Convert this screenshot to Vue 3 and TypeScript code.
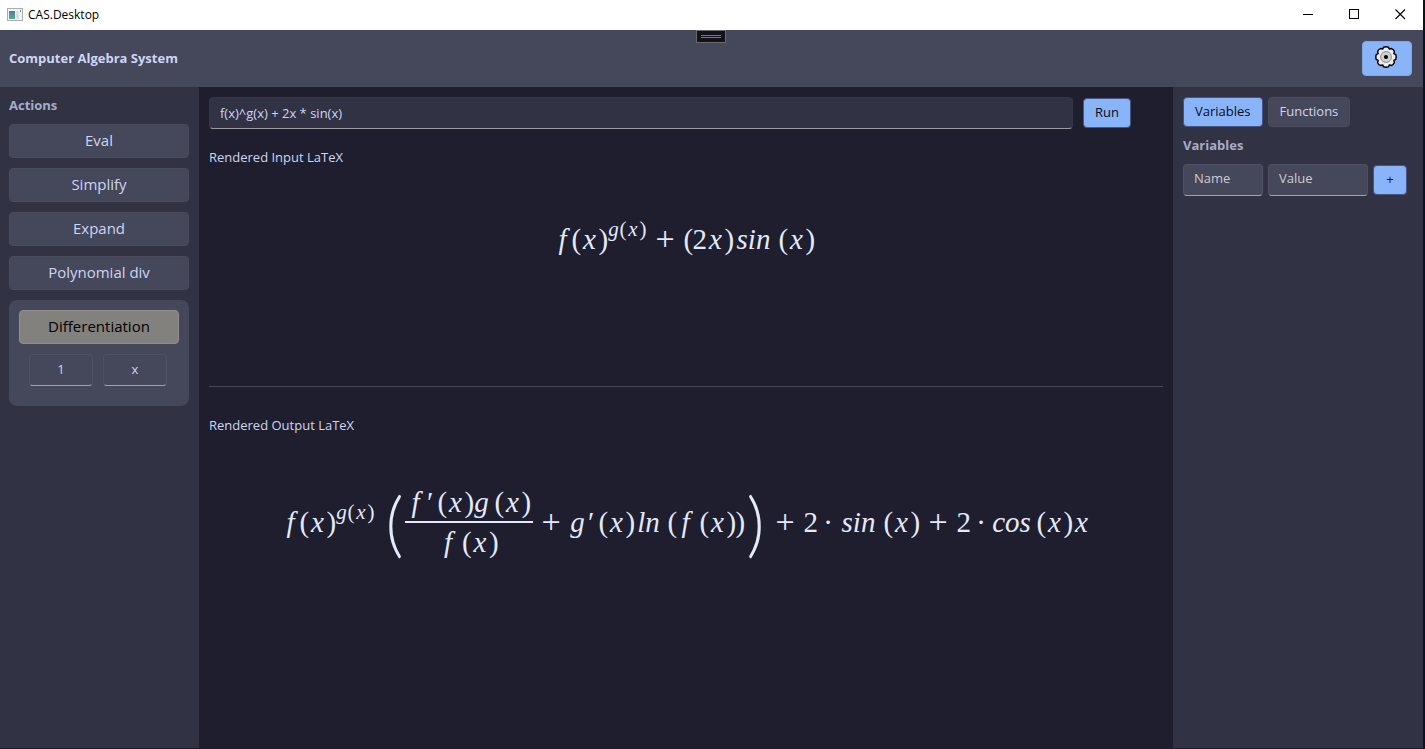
<script setup lang="ts">
import { ref } from 'vue'

interface Glyph {
  text: string
  kind: string
}

interface Term {
  kind: 'glyph' | 'sup' | 'frac'
  glyph?: Glyph
  top?: Glyph[]
  bottom?: Glyph[]
}

const kinds: Record<string, string> = {
  f: 'wide',
  x: 'wide',
  g: 'letter',
  '2': 'digit',
  '(': 'paren',
  ')': 'paren',
  '+': 'plus',
  '·': 'dot',
  '′': 'prime',
  sin: 'word',
  cos: 'word',
  ln: 'short-word',
  '~': 'gap',
  '[': 'tall open',
  ']': 'tall close',
}

const tall: Record<string, string> = { '[': '(', ']': ')', '~': '' }

function glyphs(source: string): Glyph[] {
  return source.split(' ').map((s) => ({ text: tall[s] ?? s, kind: kinds[s] ?? 'letter' }))
}

function terms(source: string): Term[] {
  return glyphs(source).map((glyph) => ({ kind: 'glyph', glyph }))
}

const power: Term[] = [...terms('f ( x )'), { kind: 'sup', top: glyphs('g ( x )') }]

const formulas: Record<'input' | 'output', Term[]> = {
  input: [...power, ...terms('+ ( 2 x ) sin ~ ( x )')],
  output: [
    ...power,
    ...terms('['),
    { kind: 'frac', top: glyphs('f ′ ~ ( x ) g ~ ( x )'), bottom: glyphs('f ~ ( x )') },
    ...terms('+ g ′ ~ ( x ) ln ~ ( f ~ ( x ) ) ] + 2 · sin ~ ( x ) + 2 · cos ~ ( x ) x'),
  ],
}

const panels: { key: 'input' | 'output'; label: string }[] = [
  { key: 'input', label: 'Rendered Input LaTeX' },
  { key: 'output', label: 'Rendered Output LaTeX' },
]

const actions = ['Eval', 'Simplify', 'Expand', 'Polynomial div']
const tabs = ['Variables', 'Functions']
const tab = ref('Variables')
const expression = ref('f(x)^g(x) + 2x * sin(x)')
const order = ref('1')
const variable = ref('x')
const newName = ref('')
const newValue = ref('')
</script>

<template>
  <div class="window">
    <div class="titlebar">
      <svg class="app-icon" width="16" height="14" viewBox="0 0 16 14">
        <defs>
          <linearGradient id="pane" x1="0" y1="0" x2="0" y2="1">
            <stop offset="0" stop-color="#4a7fb5" />
            <stop offset="1" stop-color="#58b07c" />
          </linearGradient>
        </defs>
        <rect x="0.5" y="0.5" width="15" height="12" fill="#f4f4f4" stroke="#a9adb3" />
        <rect x="2" y="3" width="6" height="8" fill="url(#pane)" />
        <rect x="9" y="3" width="3" height="8" fill="#dcdee0" />
        <rect x="13" y="2" width="1" height="2" fill="#4c9a78" />
      </svg>
      <span class="app-name">CAS.Desktop</span>
      <button class="caption" aria-label="Minimize">
        <svg width="11" height="11" viewBox="0 0 11 11"><path d="M0 5.5H10" stroke="#000" /></svg>
      </button>
      <button class="caption" aria-label="Maximize">
        <svg width="11" height="11" viewBox="0 0 11 11"><rect x="0.5" y="0.5" width="9" height="9" fill="none" stroke="#000" /></svg>
      </button>
      <button class="caption" aria-label="Close">
        <svg width="11" height="11" viewBox="0 0 11 11"><path d="M0.5 0.5L10 10M10 0.5L0.5 10" stroke="#000" stroke-width="1.1" /></svg>
      </button>
    </div>

    <header class="header">
      <h1>Computer Algebra System</h1>
      <div class="grip"><i></i><i></i></div>
      <button class="settings" aria-label="Settings">
        <svg width="24" height="24" viewBox="0 0 24 24">
          <path
            d="M9.6 2.2Q12 1.4 14.4 2.2L15.4 4.1L17.6 3.6Q19.8 4.4 20.4 6.4L19.9 8.6L21.8 9.6Q22.6 12 21.8 14.4L19.9 15.4L20.4 17.6Q19.6 19.8 17.6 20.4L15.4 19.9L14.4 21.8Q12 22.6 9.6 21.8L8.6 19.9L6.4 20.4Q4.2 19.6 3.6 17.6L4.1 15.4L2.2 14.4Q1.4 12 2.2 9.6L4.1 8.6L3.6 6.4Q4.4 4.2 6.4 3.6L8.6 4.1Z"
            fill="#ececec" stroke="#000" stroke-width="1.5" stroke-linejoin="round"
          />
          <circle cx="12" cy="12" r="5.4" fill="#d2d2d2" stroke="#8c8c8c" stroke-width="1" />
          <circle cx="12" cy="12" r="2.1" fill="#000" />
        </svg>
      </button>
    </header>

    <div class="body">
      <aside class="actions">
        <h2>Actions</h2>
        <button v-for="action in actions" :key="action" class="action">{{ action }}</button>
        <div class="group">
          <button class="action active">Differentiation</button>
          <div class="params">
            <input v-model="order" class="field" aria-label="Order" />
            <input v-model="variable" class="field" aria-label="Variable" />
          </div>
        </div>
      </aside>

      <main class="work">
        <form class="entry" @submit.prevent>
          <input v-model="expression" class="field" aria-label="Expression" />
          <div class="run"><button class="small primary">Run</button></div>
        </form>
        <section v-for="panel in panels" :key="panel.key" class="panel" :class="panel.key">
          <p>{{ panel.label }}</p>
          <div class="formula">
            <template v-for="(term, i) in formulas[panel.key]" :key="i">
              <span v-if="term.glyph" class="glyph" :class="term.glyph.kind">{{ term.glyph.text }}</span>
              <span v-else-if="term.kind === 'sup'" class="sup">
                <span v-for="(g, j) in term.top" :key="j" class="glyph" :class="g.kind">{{ g.text }}</span>
              </span>
              <span v-else class="frac">
                <span class="row">
                  <span v-for="(g, j) in term.top" :key="j" class="glyph" :class="g.kind">{{ g.text }}</span>
                </span>
                <span class="row">
                  <span v-for="(g, j) in term.bottom" :key="j" class="glyph" :class="g.kind">{{ g.text }}</span>
                </span>
              </span>
            </template>
          </div>
        </section>
      </main>

      <aside class="symbols">
        <div class="tabs">
          <button
            v-for="name in tabs" :key="name" class="small" :class="{ primary: tab === name }"
            @click="tab = name"
          >{{ name }}</button>
        </div>
        <h2>{{ tab }}</h2>
        <form class="add" @submit.prevent>
          <input v-model="newName" class="field name" placeholder="Name" aria-label="Name" />
          <input v-model="newValue" class="field value" placeholder="Value" aria-label="Value" />
          <button class="small primary" aria-label="Add">+</button>
        </form>
      </aside>
    </div>
  </div>
</template>

<style>
body {
  margin: 0;
  background: #12111b;
}
</style>

<style scoped>
* {
  box-sizing: border-box;
}

.window {
  display: flex;
  flex-direction: column;
  min-height: 100vh;
  border-right: 2px solid #12111b;
  border-bottom: 1px solid #1e1e2e;
  background: #1e1e2e;
  color: #cdd6f4;
  font: 13px/20px "Open Sans", "Noto Sans", sans-serif;
}

button,
input {
  margin: 0;
  font: inherit;
  color: inherit;
}

.titlebar {
  display: flex;
  align-items: center;
  height: 30px;
  padding: 0 0 1px 7px;
  background: #fff;
  color: #000;
  font-size: 12px;
}

.app-name {
  flex: 1;
  margin-left: 5px;
}

.caption {
  display: flex;
  align-items: center;
  justify-content: center;
  width: 46px;
  height: 29px;
  padding: 0;
  border: 0;
  background: none;
}

.header {
  position: relative;
  display: flex;
  align-items: center;
  justify-content: space-between;
  height: 57px;
  padding: 0 11px 0 9px;
  background: #45475a;
}

h1,
h2 {
  margin: 0;
  font-size: 13px;
  line-height: 20px;
  font-weight: 700;
}

h1 {
  padding-bottom: 2px;
}

h2 {
  color: #a6adc8;
}

.grip {
  position: absolute;
  top: 0;
  left: 50%;
  display: flex;
  flex-direction: column;
  justify-content: center;
  gap: 1px;
  width: 30px;
  height: 13px;
  margin-left: -16px;
  padding: 0 4px;
  border: 1px solid #6b6b66;
  background: #11121c;
}

.grip i {
  height: 1px;
  background: #77777d;
}

.settings {
  display: flex;
  align-items: center;
  justify-content: center;
  width: 50px;
  height: 35px;
  padding: 0 2px 3px 0;
  border: 1px solid #7fa6e6;
  border-radius: 4px;
  background: #89b4fa;
}

.body {
  display: flex;
  flex: 1;
}

.actions {
  display: flex;
  flex-direction: column;
  gap: 10px;
  width: 199px;
  padding: 8px 10px 8px 9px;
  background: #313244;
}

.actions h2 {
  margin-bottom: -1px;
}

.action {
  height: 34px;
  padding: 0 0 2px;
  border: 1px solid #4a4b5d;
  border-radius: 4px;
  background: #45475a;
  font-size: 15px;
}

.action.active {
  width: 100%;
  border-color: #918f8b;
  background: #83817d;
  color: #000;
}

.group {
  padding: 10px 10px 20px;
  border-radius: 8px;
  background: #45475a;
}

.params {
  display: flex;
  gap: 10px;
  padding: 10px 12px 0 10px;
}

.field {
  flex: 1;
  min-width: 0;
  height: 32px;
  padding: 0 10px;
  border: 1px solid #505164;
  border-bottom-color: #a3a3aa;
  border-radius: 4px;
  background: #45475a;
  outline: none;
}

.field::placeholder {
  color: #cccccf;
  opacity: 1;
}

.params .field {
  padding-bottom: 2px;
  text-align: center;
}

.work {
  flex: 1;
  min-width: 0;
  padding: 10px;
}

.entry {
  display: flex;
  align-items: center;
  gap: 10px;
}

.entry .field {
  border-color: #343546;
  border-bottom-color: #9a9aa2;
  background: #313244;
}

.run {
  width: 80px;
}

.small {
  display: block;
  height: 30px;
  padding: 0 11px 2px;
  border: 1px solid #4a4b5d;
  border-radius: 4px;
  background: #45475a;
}

.small.primary {
  border-color: #44567d;
  background: #89b4fa;
  color: #0b0c14;
}

.panel {
  padding-top: 18px;
}

.panel p {
  margin: 0;
}

.panel.input {
  height: 258px;
  border-bottom: 1px solid #45475a;
}

.panel.output {
  padding-top: 28px;
}

.formula {
  display: flex;
  align-items: center;
  justify-content: center;
  color: #e4eafc;
  font: italic 29px/40px "Liberation Serif", serif;
}

.input .formula {
  padding: 52px 4px 0 0;
}

.output .formula {
  padding-top: 47px;
}

.glyph {
  flex: none;
  display: inline-block;
  text-align: center;
}

.wide {
  width: 18px;
}

.letter {
  width: 16px;
}

.digit {
  width: 14px;
  font-style: normal;
}

.paren {
  width: 9px;
  font-style: normal;
}

.plus {
  width: 37px;
  font-size: 34px;
  font-style: normal;
}

.dot {
  width: 21px;
  font-style: normal;
}

.prime {
  width: 8px;
}

.word {
  width: 40px;
}

.short-word {
  width: 28px;
}

.gap {
  width: 5px;
}

.tall {
  width: 20px;
  font: 300 70px/80px Lato, sans-serif;
}

.tall.open {
  margin-left: 10px;
}

.tall.close {
  width: 22px;
}

.sup {
  position: relative;
  bottom: 10px;
  display: flex;
  font-size: 21px;
  line-height: 24px;
}

.sup .wide {
  width: 13px;
}

.sup .letter {
  width: 12px;
}

.sup .paren {
  width: 7px;
}

.frac {
  display: flex;
  flex-direction: column;
  line-height: 38px;
}

.row {
  display: flex;
  justify-content: center;
  padding: 0 2px;
}

.row + .row {
  border-top: 2px solid #e4eafc;
}

.symbols {
  width: 250px;
  padding: 10px;
  background: #313244;
}

.tabs {
  display: flex;
  gap: 5px;
}

.symbols h2 {
  margin: 8px 0 9px;
}

.add {
  display: flex;
  align-items: center;
  gap: 5px;
}

.add .field {
  flex: none;
  padding-bottom: 4px;
}

.add .name {
  width: 80px;
}

.add .value {
  width: 100px;
}

.add .small {
  min-width: 34px;
}
</style>
